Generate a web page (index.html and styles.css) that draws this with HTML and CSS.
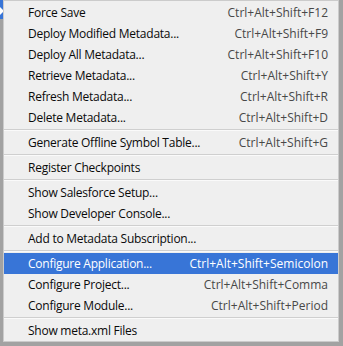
FILE: index.html
```html
<!DOCTYPE html>
<html lang="en">
  <head>
    <meta charset="UTF-8" />
    <title>Force.com Menu</title>
    <link rel="stylesheet" href="styles.css">
  </head>
  <body>
    <div class="parent-item">
      <svg width="6" height="8" viewBox="0 0 6 8"><path d="M0 0 L4 4 L0 8 Z" fill="#ffffff" /></svg>
    </div>

    <div class="menu">
      <div class="item"><span class="label">Force Save</span><span class="keys">Ctrl+Alt+Shift+F12</span></div>
      <div class="item"><span class="label">Deploy Modified Metadata...</span><span class="keys">Ctrl+Alt+Shift+F9</span></div>
      <div class="item"><span class="label">Deploy All Metadata...</span><span class="keys">Ctrl+Alt+Shift+F10</span></div>
      <div class="item"><span class="label">Retrieve Metadata...</span><span class="keys">Ctrl+Alt+Shift+Y</span></div>
      <div class="item"><span class="label">Refresh Metadata...</span><span class="keys">Ctrl+Alt+Shift+R</span></div>
      <div class="item"><span class="label">Delete Metadata...</span><span class="keys">Ctrl+Alt+Shift+D</span></div>
      <div class="separator"></div>
      <div class="item"><span class="label">Generate Offline Symbol Table...</span><span class="keys">Ctrl+Alt+Shift+G</span></div>
      <div class="separator"></div>
      <div class="item"><span class="label">Register Checkpoints</span></div>
      <div class="separator"></div>
      <div class="item"><span class="label">Show Salesforce Setup...</span></div>
      <div class="item"><span class="label">Show Developer Console...</span></div>
      <div class="separator"></div>
      <div class="item"><span class="label">Add to Metadata Subscription...</span></div>
      <div class="separator"></div>
      <div class="item selected"><span class="label">Configure Application...</span><span class="keys">Ctrl+Alt+Shift+Semicolon</span></div>
      <div class="item"><span class="label">Configure Project...</span><span class="keys">Ctrl+Alt+Shift+Comma</span></div>
      <div class="item"><span class="label">Configure Module...</span><span class="keys">Ctrl+Alt+Shift+Period</span></div>
      <div class="separator"></div>
      <div class="item"><span class="label">Show meta.xml Files</span></div>
    </div>
  </body>
</html>
```

FILE: styles.css
```css
* {
  margin: 0;
  padding: 0;
  box-sizing: border-box;
}

body {
  position: relative;
  background-color: #a2a2a2;
  padding-left: 3px;
  font-family: "Open Sans", "Noto Sans", sans-serif;
  font-size: 12px;
}

/* selected item of the parent menu, peeking out on the left */
.parent-item {
  position: absolute;
  left: 0;
  top: 0;
  width: 8px;
  height: 19px;
  background-color: #3875d7;
  padding: 7px 0 0 0;
}

.parent-item svg {
  display: block;
}

.menu {
  position: relative;
  width: 336px;
  background-color: #efefef;
  border: 1px solid #cbcbcb;
  padding-top: 1px;
}

.item {
  display: flex;
  justify-content: space-between;
  align-items: center;
  height: 21px;
  padding: 0 10px 0 24px;
  color: #0a0a0a;
  white-space: nowrap;
}

.label {
  letter-spacing: -0.25px;
}

.keys {
  color: #484848;
}

.item.selected {
  background-color: #3875d7;
  color: white;
}

.item.selected .keys {
  color: white;
}

.separator {
  height: 4px;
  padding-top: 1px;
}

.separator::before {
  content: "";
  display: block;
  height: 1px;
  background-color: #cfcfcf;
  border-bottom: 1px solid #fafafa;
  box-sizing: content-box;
}
```
